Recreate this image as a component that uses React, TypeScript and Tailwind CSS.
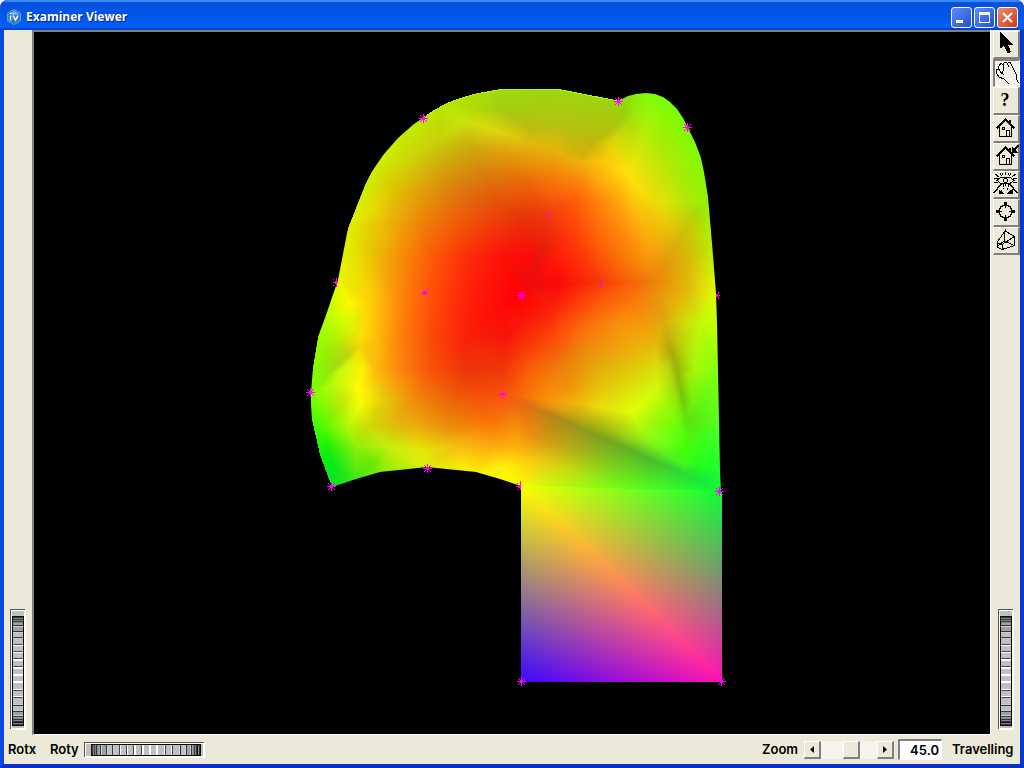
import React, { useState } from "react";

type Vertex = [number, number, string];

const SURFACE: Vertex[] = [
  // outline
  [332, 487, "0fe02a"], [320, 455, "10f010"], [311, 415, "50ff00"], [310, 392, "78ff00"],
  [313, 367, "82ff00"], [318, 337, "96ff00"], [325, 318, "b4ff00"], [337, 280, "e6f800"],
  [348, 228, "dcf000"], [365, 185, "ccf000"], [376, 163, "ccf000"], [390, 145, "ccec00"],
  [405, 130, "c4ec00"], [422, 116, "bcec00"], [441, 104, "b8e800"], [464, 95, "aee000"],
  [503, 87, "9fda10"], [528, 86, "9cd810"], [555, 87, "9cd610"], [577, 91, "9cd610"],
  [618, 99, "96d80c"], [636, 92, "84f00a"], [652, 91, "78ff08"], [673, 102, "74ff04"],
  [690, 127, "78ff00"], [702, 156, "80fc04"], [707, 172, "84fa05"], [710, 197, "8cf800"],
  [713, 243, "b4ee05"], [717, 293, "dcff00"], [718, 323, "ccff00"], [719, 370, "80ff10"],
  [720, 420, "5aff20"], [721, 470, "20ff30"], [722, 493, "0aff37"], [521, 490, "f8ff00"],
  [500, 481, "faf800"], [476, 474, "f8f208"], [427, 469, "dcee0a"], [380, 474, "80ea05"],
  [356, 481, "40e818"],
  // upper left
  [463, 121, "c8e40c"], [493, 130, "dcd80e"], [515, 137, "dec80e"], [530, 143, "e0b80c"],
  [500, 110, "a8cc10"], [470, 108, "b2dc08"], [440, 140, "c8d008"], [415, 155, "ccd408"],
  [470, 146, "ccac0c"], [445, 162, "d0a80c"], [500, 152, "dca00c"], [530, 110, "a8cc10"],
  [560, 125, "b4c410"], [530, 128, "bcbc10"], [557, 151, "e4b40a"],
  [583, 163, "f0b00a"], [593, 144, "c4b40c"], [608, 132, "b4c00c"], [583, 155, "d0b00c"],
  [625, 112, "98d00c"], [530, 162, "e89408"], [483, 173, "d88010"],
  [423, 193, "e09c0a"], [455, 190, "dc7c0c"], [390, 185, "dccc00"], [373, 210, "e8dc04"],
  [390, 220, "ecb408"], [423, 223, "f08008"], [457, 223, "f05c08"], [490, 223, "f04008"],
  [523, 217, "e83408"], [497, 200, "e45408"], [527, 185, "ea6408"], [557, 172, "f48808"],
  [357, 258, "e8e000"], [380, 258, "ecb408"], [403, 258, "f88808"], [433, 258, "fc5808"],
  [467, 258, "fc2c08"], [503, 258, "fc1008"], [528, 258, "ff0808"], [350, 303, "fff800"],
  // left and centre
  [370, 303, "ffd008"], [400, 303, "ff8808"], [433, 303, "ff4c08"], [467, 303, "ff2008"],
  [503, 303, "ff0808"], [521, 295, "ff0000"], [335, 337, "b0f404"], [350, 325, "dcf804"],
  [362, 337, "fcdc08"], [377, 337, "fdbc08"], [400, 337, "ff8008"], [433, 337, "fc4808"],
  [467, 337, "f82008"], [507, 337, "f81408"], [360, 346, "f4d408"], [350, 353, "c8d00c"],
  [338, 364, "a8d810"], [325, 378, "90ec08"], [353, 360, "e4f008"], [341, 371, "c8fc0c"],
  [363, 368, "fcf008"], [377, 370, "fcb80c"], [403, 370, "fa8010"], [433, 370, "f85008"],
  [467, 370, "ee3408"], [503, 370, "f03808"], [358, 387, "fffc08"], [342, 400, "c4e808"],
  [350, 384, "e8f808"], [330, 386, "b0fc08"], [320, 403, "80fc05"], [360, 403, "f8fc08"],
  [385, 400, "e4c808"], [400, 388, "f49c0c"],
  [413, 403, "f0900c"], [450, 403, "ec6808"], [482, 403, "f45808"], [503, 394, "fa5010"],
  [323, 427, "50fa05"], [347, 427, "b0f808"], [367, 428, "ccdc08"], [390, 425, "dcc008"],
  [413, 427, "ecb00c"], [450, 427, "ec8c08"], [490, 424, "f87808"], [327, 447, "18f008"],
  [357, 447, "90f008"], [390, 447, "c4f00c"], [420, 450, "e4e808"], [455, 447, "f4c010"],
  [490, 447, "fcac10"], [517, 447, "fdb00a"], [335, 467, "08e818"], [373, 463, "68e808"],
  [463, 463, "fce008"], [503, 467, "fff008"],
  // upper right
  [592, 160, "f6bc0a"], [612, 141, "dcd40a"], [630, 122, "acdc08"], [605, 160, "fcc80a"],
  [627, 173, "ffe00a"], [640, 150, "d0e808"], [645, 128, "b0f008"],
  [662, 145, "a8ec04"], [670, 172, "b8e804"], [600, 177, "feb00c"], [580, 182, "fc840c"],
  [620, 200, "ffa80c"], [635, 205, "fcc40c"], [600, 200, "ff880a"], [575, 200, "ff5c08"],
  [548, 215, "f03a0c"], [555, 195, "f8600c"], [650, 200, "f0dc08"], [667, 203, "d8e408"],
  [685, 200, "b4e808"], [698, 213, "a8dc08"], [690, 175, "98f004"], [650, 243, "fba80c"],
  [667, 230, "ecc00a"], [687, 228, "ccc408"], [675, 248, "dcac08"],
  [545, 245, "e82008"], [538, 262, "e8140c"], [530, 283, "ec0c0c"], [550, 268, "ff1008"],
  [570, 240, "ff3408"], [600, 240, "ff6408"], [630, 240, "ff8c0c"], [600, 220, "ff740a"],
  [640, 262, "f88c08"], [656, 278, "ec840c"], [657, 293, "ec900c"], [630, 283, "f86008"],
  [600, 283, "f83808"], [560, 285, "fc0a05"], [690, 260, "d8bc08"], [687, 290, "e4b80a"],
  [705, 287, "e4e008"],
  // lower right
  [600, 303, "fc5c08"], [550, 310, "fc2008"], [633, 305, "fc7c0a"], [517, 327, "f81808"],
  [550, 337, "fc4408"], [583, 330, "fa700c"], [617, 325, "f8900c"], [645, 325, "f49c0c"],
  [520, 353, "f83808"], [533, 370, "f86408"], [562, 367, "ec800c"], [583, 355, "ec8c0c"],
  [600, 370, "e4b00c"], [567, 387, "f0900a"], [600, 388, "e6c40c"], [618, 352, "eca80c"],
  [633, 372, "e0cc0a"], [640, 352, "e8b80a"], [657, 343, "e4b80a"], [657, 365, "d8dc0c"],
  [657, 387, "d0f80c"], [632, 392, "dce808"], [633, 412, "e0ff08"], [617, 410, "e4ec0a"],
  [600, 407, "ecdc0c"], [583, 404, "eec00c"], [566, 402, "f4a80c"], [550, 400, "f8940a"],
  [535, 398, "fa8008"], [520, 396, "fa6808"], [667, 403, "a0fa05"], [680, 430, "60ff08"],
  [664, 323, "dcac0c"], [687, 323, "d0e008"], [700, 323, "c4f808"], [675, 308, "e0b80a"],
  [660, 309, "e49c0c"], [667, 337, "c8ac0c"], [672, 353, "aca80a"], [677, 370, "98b40a"],
  [680, 387, "84c008"], [683, 403, "70cc08"], [686, 419, "60e00c"], [689, 435, "50f010"],
  [668, 365, "bcd40a"], [673, 387, "a4e00a"], [677, 405, "88ec08"], [681, 345, "bcd008"],
  [687, 375, "a0e808"], [695, 370, "a4f808"], [693, 403, "74f40c"], [704, 403, "60fa14"],
  [707, 437, "3cff20"], [687, 449, "40ff08"], [702, 465, "20ff20"],
  [518, 401, "ec6410"], [533, 407, "d87410"], [551, 415, "b88414"], [567, 422, "a09018"],
  [584, 430, "909a1c"], [600, 437, "80a020"], [617, 444, "70a824"], [633, 451, "60b028"],
  [650, 459, "4cbc2c"], [667, 466, "3ccc30"], [684, 474, "2cd834"], [702, 482, "18e838"],
  [548, 406, "e89010"], [562, 410, "dca010"], [580, 415, "ccb010"], [598, 421, "bcbc10"],
  [615, 429, "acc810"], [632, 438, "94dc18"], [640, 428, "b0f810"], [650, 444, "80f014"],
  [667, 444, "70ff18"], [667, 455, "5cf020"], [685, 464, "40f820"], [533, 437, "e89010"],
  [567, 447, "bca818"], [600, 460, "8cc418"], [633, 470, "60d820"], [665, 480, "40e82c"],
  [530, 463, "fcd010"], [567, 470, "c8dc10"], [600, 477, "8ce818"], [560, 489, "b8fc10"],
  [600, 490, "88ff10"], [650, 491, "50ff20"], [685, 492, "28ff2c"],
];

const OUTLINE =
  "332,487 326,476 321,462 317,448 314,434 312,420 311,405 311,393 313,367 318,337 325,318 338,280 348,228 365,185 371,173 377,164 384,154 391,146 398,138 406,131 414,124 423,118 432,112 442,106 453,101 465,97 476,94 487,92 503,89 530,89 555,89 565,90 577,93 613,100 618,101 628,96 636,94 646,93 655,94 663,97 670,102 677,109 683,118 688,128 695,142 701,158 704,172 708,197 712,243 716,293 717,323 718,370 719,420 720,470 721,493 521,490 521,486 500,479 476,472 427,467 380,472 356,479";

type Triangle = [number, number, number];

function triangulate(points: Vertex[]): Triangle[] {
  const all: [number, number][] = points.map((p) => [p[0], p[1]]);
  const n = all.length;
  all.push([-9000, -8000], [9500, -8100], [500, 12000]);
  let triangles: Triangle[] = [[n, n + 1, n + 2]];
  const encloses = (t: Triangle, x: number, y: number) => {
    const [ax, ay] = all[t[0]];
    const [bx, by] = all[t[1]];
    const [cx, cy] = all[t[2]];
    const d = 2 * (ax * (by - cy) + bx * (cy - ay) + cx * (ay - by));
    const a2 = ax * ax + ay * ay;
    const b2 = bx * bx + by * by;
    const c2 = cx * cx + cy * cy;
    const ux = (a2 * (by - cy) + b2 * (cy - ay) + c2 * (ay - by)) / d;
    const uy = (a2 * (cx - bx) + b2 * (ax - cx) + c2 * (bx - ax)) / d;
    return (ux - x) ** 2 + (uy - y) ** 2 < (ux - ax) ** 2 + (uy - ay) ** 2;
  };
  for (let i = 0; i < n; i++) {
    const edges = new Map<string, [number, number]>();
    const kept: Triangle[] = [];
    for (const t of triangles) {
      if (!encloses(t, all[i][0], all[i][1])) {
        kept.push(t);
        continue;
      }
      for (const [a, b] of [[t[0], t[1]], [t[1], t[2]], [t[2], t[0]]]) {
        const key = a < b ? `${a}-${b}` : `${b}-${a}`;
        if (edges.has(key)) edges.delete(key);
        else edges.set(key, [a, b]);
      }
    }
    edges.forEach(([a, b]) => {
      const area = (all[b][0] - all[a][0]) * (all[i][1] - all[a][1]) - (all[i][0] - all[a][0]) * (all[b][1] - all[a][1]);
      if (Math.abs(area) > 0.01) kept.push([a, b, i]);
    });
    triangles = kept;
  }
  return triangles.filter((t) => t.every((k) => k < n));
}

const channelOf = (hex: string, c: number) => parseInt(hex.slice(c * 2, c * 2 + 2), 16);
const paint = (c: number, v: number) => `rgb(${[0, 1, 2].map((k) => (k === c ? Math.round(v) : 0)).join(",")})`;

// Each colour channel is linear over a triangle, so one linear gradient per channel shades it smoothly.
function Facet({ corners, channel, id }: { corners: Vertex[]; channel: number; id: string }) {
  const values = corners.map((v) => channelOf(v[2], channel));
  const [a, b, c] = corners;
  const points = corners.map((v) => `${v[0]},${v[1]}`).join(" ");
  const det = (b[0] - a[0]) * (c[1] - a[1]) - (c[0] - a[0]) * (b[1] - a[1]);
  const gx = ((values[1] - values[0]) * (c[1] - a[1]) - (values[2] - values[0]) * (b[1] - a[1])) / det;
  const gy = ((values[2] - values[0]) * (b[0] - a[0]) - (values[1] - values[0]) * (c[0] - a[0])) / det;
  const low = Math.min(...values);
  const high = Math.max(...values);
  if (high === low) return <polygon points={points} fill={paint(channel, low)} />;
  const start = corners[values.indexOf(low)];
  const scale = (high - low) / (gx * gx + gy * gy);
  return (
    <>
      <linearGradient
        id={id}
        gradientUnits="userSpaceOnUse"
        x1={start[0]}
        y1={start[1]}
        x2={start[0] + gx * scale}
        y2={start[1] + gy * scale}
      >
        <stop offset="0" stopColor={paint(channel, low)} />
        <stop offset="1" stopColor={paint(channel, high)} />
      </linearGradient>
      <polygon points={points} fill={`url(#${id})`} />
    </>
  );
}

const surfaceFacets: Vertex[][] = triangulate(SURFACE).map((t) => t.map((k) => SURFACE[k]));
const panelFacets: Vertex[][] = [
  [[521, 486, "f8ff00"], [722, 491, "0aff37"], [722, 682, "ff10b4"]],
  [[521, 486, "f8ff00"], [722, 682, "ff10b4"], [521, 682, "3a08ff"]],
];

function Markers() {
  const full: [number, number][] = [
    [423, 118], [618, 101], [687, 127], [521, 295], [310, 392],
    [331, 486], [427, 468], [719, 491], [521, 681], [721, 681],
  ];
  return (
    <g fill="#ff00ff" shapeRendering="crispEdges">
      {full.map(([x, y]) => (
        <path
          key={`${x}-${y}`}
          transform={`translate(${x} ${y})`}
          d="M-4 0h9v1h-9zM0-4h1v9h-1zM-1-1h3v3h-3zM-3-3h1v1h-1zM3-3h1v1h-1zM-3 3h1v1h-1zM3 3h1v1h-1zM-2-2h1v1h-1zM2-2h1v1h-1zM-2 2h1v1h-1zM2 2h1v1h-1z"
        />
      ))}
      <path d="M422 292h6v1h-6zM423 291h3v3h-3zM425 290h1v5h-1zM427 289h1v1h-1zM422 294h1v1h-1z" />
      <path d="M333 282h5v1h-5zM336 278h1v9h-1zM335 281h2v3h-2zM333 279h1v1h-1zM333 285h1v1h-1z" />
      <path d="M600 280h1v8h-1z" />
      <path d="M548 213h1v4h-1zM549 212h1v3h-1z" />
      <path d="M502 391h1v7h-1zM500 393h5v2h-5zM499 395h1v1h-1zM505 395h1v1h-1z" />
      <path d="M716 295h4v1h-4zM716 294h2v3h-2zM718 292h1v2h-1zM718 297h1v2h-1z" />
      <path d="M516 486h5v1h-5zM520 481h1v9h-1zM518 485h3v3h-3zM517 483h1v1h-1zM517 489h1v1h-1z" />
    </g>
  );
}

function Scene() {
  return (
    <svg className="block h-full w-full" viewBox="34 32 956 702" role="img" aria-label="Shaded surface">
      <defs>
        <clipPath id="outline">
          <polygon points={OUTLINE} />
        </clipPath>
      </defs>
      {[0, 1, 2].map((channel) => (
        <g key={channel} className="mix-blend-screen" shapeRendering="crispEdges">
          <g clipPath="url(#outline)">
            {surfaceFacets.map((corners, k) => (
              <Facet key={k} corners={corners} channel={channel} id={`s${channel}-${k}`} />
            ))}
          </g>
          {panelFacets.map((corners, k) => (
            <Facet key={k} corners={corners} channel={channel} id={`p${channel}-${k}`} />
          ))}
        </g>
      ))}
      <polyline
        points="423,118 432,112 442,106 453,101 465,97 476,94 487,92 503,89 555,89 577,93 618,101"
        fill="none"
        stroke="#baf408"
        strokeWidth="1"
        shapeRendering="crispEdges"
      />
      <Markers />
    </svg>
  );
}

const TICKS = [8, 10, 12, 16, 22, 28, 35, 42, 49, 57, 66, 73, 81, 88, 96, 102, 107, 110, 112, 115];

function Wheel({ label, vertical = false }: { label: string; vertical?: boolean }) {
  const box = (along: number, across: number, length: number, depth: number, fill: string) =>
    vertical ? (
      <rect x={across} y={along} width={depth} height={length} fill={fill} />
    ) : (
      <rect x={along} y={across} width={length} height={depth} fill={fill} />
    );
  return (
    <div className={vertical ? "relative h-[121px] w-4" : "relative h-4 w-[121px]"}>
      <svg
        className="block h-full w-full"
        viewBox={vertical ? "0 0 16 121" : "0 0 121 16"}
        shapeRendering="crispEdges"
        aria-hidden="true"
      >
        {box(0, 0, 121, 16, "#ffffff")}
        {box(0, 0, 120, 15, "#555555")}
        {box(1, 1, 119, 14, "#ffffff")}
        {box(2, 2, 117, 12, "#c0c0c0")}
        {box(7, 2, 110, 12, "#000000")}
        {box(7, 3, 110, 10, "#303030")}
        {box(13, 3, 98, 10, "#a0a0a0")}
        {box(22, 3, 80, 10, "#c0c0c0")}
        {box(7, 3, 6, 10, "#101010")}
        {box(111, 3, 6, 10, "#101010")}
        {TICKS.map((t) => {
          const inner = t > 30 && t < 92;
          const light = inner ? "#ffffff" : t > 14 && t < 108 ? "#d0d0d0" : "#808880";
          return (
            <g key={t}>
              {box(t, 3, 1, 10, inner ? "#484848" : "#383838")}
              {box(t < 60 ? t + 1 : t - 1, 3, t > 45 && t < 76 ? 2 : 1, 10, light)}
            </g>
          );
        })}
      </svg>
      <input
        type="range"
        aria-label={label}
        className="absolute inset-0 m-0 h-full w-full cursor-pointer opacity-0"
      />
    </div>
  );
}

const HOUSE = (
  <>
    <path d="M3.500 13.500L12.500 4.500L21.500 13.500" />
    <path d="M6.500 12V21.500H18.500V12M13.500 21V15.500H16.500V21M17.500 9V5.500H16.500V8" strokeWidth="1" />
    <path d="M9 12h3v3h-3zM10 13h1v1h-1z" fill="#000" fillRule="evenodd" stroke="none" />
  </>
);

const TOOLS: { name: string; icon: React.ReactNode }[] = [
  { name: "Select", icon: <path d="M8 3V16L11 13.500L15 21.500L17 20.500L14 13H18.500Z" fill="#000" /> },
  {
    name: "View",
    icon: (
      <g strokeWidth="1">
        <path d="M16 25L11 20L6 18L3.500 14V10.500L6 10L7.500 13L11 16" />
        <path d="M5 9.500L6.500 5.500L8.500 4.500L10.500 6L11 9.500L9 14" />
        <path d="M10 5L12 3L14.500 4.500L16 8" />
        <path d="M14.500 3.500H17.500L19 7L20.500 9.500L23 15L24 21L25.500 24" />
      </g>
    ),
  },
  {
    name: "Help",
    icon: (
      <text x="12" y="19" textAnchor="middle" fill="#000" stroke="none" className="font-['Liberation_Serif',serif] text-[18px] font-bold">
        ?
      </text>
    ),
  },
  { name: "Home", icon: HOUSE },
  {
    name: "Set home",
    icon: (
      <>
        {HOUSE}
        <path d="M25.500 2.500L21 7" strokeWidth="2" />
        <path d="M18.500 3.500V9.500H24.500Z" fill="#000" stroke="none" />
      </>
    ),
  },
  {
    name: "View all",
    icon: (
      <g strokeWidth="1">
        <path d="M4 9.500L8 6H17L21 9.500L17 12.500H8Z" />
        <circle cx="12.500" cy="9.500" r="2" />
        <path d="M2 3L6 6M7 2L8.500 5M12.500 1V4M18 2L16.500 5M23 3L19 6M1 7L5 8M24 7L20 8M1 12L5 11M24 12L20 11M10 4L9 2M15 4L16 2M10 13V16M15 13V16M12.500 13V15" />
        <path d="M8 13L1 22M17 13L24 22" strokeWidth="1.500" />
        <path d="M11 17L8 21M14 17L17 21" strokeDasharray="2 1" />
        <path d="M6 22V19L10 22ZM15 22L19 19V22Z" fill="#000" />
      </g>
    ),
  },
  {
    name: "Seek",
    icon: (
      <>
        <circle cx="12.500" cy="12.500" r="6.500" />
        <path d="M11 3h3v4h-3zM11 18h3v4h-3zM3 11h4v3h-4zM18 11h4v3h-4z" fill="#000" stroke="none" />
        <path d="M12.500 6V9M12.500 16V19M6 12.500H9M16 12.500H19" strokeWidth="1" />
      </>
    ),
  },
  {
    name: "Perspective",
    icon: (
      <path d="M12 4L21.500 9.500V18.500L9 22.500L4 20V15.500L12 4L11 14L21.500 18.500M4 15.500L9 17.500V22.500M9 17.500L21.500 9.500M4 20L11 14" strokeWidth="1" />
    ),
  },
];

function ToolButton({ name, icon, pressed }: { name: string; icon: React.ReactNode; pressed: boolean }) {
  return (
    <button
      type="button"
      aria-label={name}
      aria-pressed={pressed}
      className={
        pressed
          ? "h-7 w-[27px] border-t-2 border-l-2 border-r border-b border-t-[#808080] border-l-[#808080] border-r-white border-b-white bg-[#f4f1e8]"
          : "h-7 w-[27px] border-t border-l border-r-2 border-b-2 border-t-white border-l-white border-r-[#808080] border-b-[#808080] bg-[#ece9d8]"
      }
    >
      <svg
        className="block h-[25px] w-6 overflow-visible"
        viewBox={pressed ? "2 2 24 25" : "1 1 24 25"}
        fill="none"
        stroke="#000"
        strokeWidth="1.500"
        shapeRendering="crispEdges"
        aria-hidden="true"
      >
        {icon}
      </svg>
    </button>
  );
}

function Logo() {
  return (
    <svg className="h-4 w-4" viewBox="0 0 16 16" aria-hidden="true">
      <path d="M8 0.500L14.500 4V12L8 15.500L1.500 12V4Z" fill="#2f7fc4" stroke="#5a9ad8" strokeWidth="1" />
      <path d="M3 5L8 2L13 5L8 6Z" fill="#7fb9e6" />
      <path d="M4.500 6.500V11.500M7 6.500L9.500 11L12 6.500" fill="none" stroke="#fff" strokeWidth="1.500" />
      <path d="M4 4.500H5.500" stroke="#fff" />
    </svg>
  );
}

const CAPTION =
  "flex h-[21px] w-[21px] items-center justify-center rounded-[3px] border border-white bg-linear-to-br";

export default function App() {
  const [zoom, setZoom] = useState(45);
  return (
    <div className="h-screen bg-[#f4f4f8] font-[Inter,'Liberation_Sans',sans-serif] text-black">
      <div className="flex h-full flex-col overflow-hidden rounded-t-lg bg-[#0a3fe0]">
        <header className="flex h-[30px] shrink-0 items-center bg-linear-to-b from-[#0a4fd8] via-[#0055ea] via-50% to-[#0460f8] px-[6px] pt-1 shadow-[inset_0_2px_1px_#3c8cf8,inset_0_-2px_1px_#0046c8]">
          <Logo />
          <h1 className="ml-1 flex-1 font-['Open_Sans','Noto_Sans',sans-serif] text-xs font-bold text-white [text-shadow:1px_1px_0_#0a1f80]">
            Examiner Viewer
          </h1>
          <div className="flex gap-[2px]">
            <button type="button" aria-label="Minimize" className={`${CAPTION} from-[#5f8cf6] to-[#2250d8]`}>
              <svg className="h-[19px] w-[19px]" viewBox="0 0 19 19" aria-hidden="true">
                <path d="M4 12h7v3h-7z" fill="#fff" />
              </svg>
            </button>
            <button type="button" aria-label="Maximize" className={`${CAPTION} from-[#5f8cf6] to-[#2250d8]`}>
              <svg className="h-[19px] w-[19px]" viewBox="0 0 19 19" aria-hidden="true">
                <path d="M4 4h11v11h-11zM5 7h9v7h-9z" fill="#fff" fillRule="evenodd" />
              </svg>
            </button>
            <button type="button" aria-label="Close" className={`${CAPTION} from-[#f08a68] to-[#c83810]`}>
              <svg className="h-[19px] w-[19px]" viewBox="0 0 19 19" aria-hidden="true">
                <path d="M5 5L14 14M14 5L5 14" stroke="#fff" strokeWidth="2" />
              </svg>
            </button>
          </div>
        </header>

        <div className="flex min-h-0 flex-1 flex-col border-x-4 border-b-4 border-l-[#0a48e0] border-r-[#0438d0] border-b-[#0a30c8]">
          <div className="flex min-h-0 flex-1 bg-[#ece9d8]">
            <aside className="flex w-7 shrink-0 flex-col justify-end pb-[5px] pl-[6px]">
              <Wheel label="Rotx" vertical />
            </aside>
            <main className="min-w-0 flex-1 border-t-2 border-l-2 border-t-[#808080] border-l-[#808080] border-b border-b-white bg-black">
              <Scene />
            </main>
            <aside className="flex w-[30px] shrink-0 flex-col items-end justify-between border-l border-white pt-px pb-[5px]">
              <div className="flex w-[27px] flex-col">
                {TOOLS.map((tool) => (
                  <ToolButton key={tool.name} name={tool.name} icon={tool.icon} pressed={tool.name === "View"} />
                ))}
              </div>
              <div className="mr-[6px]">
                <Wheel label="Travelling" vertical />
              </div>
            </aside>
          </div>

          <footer className="flex h-[29px] shrink-0 items-center bg-[#ece9d8] px-1 text-[13px] font-semibold">
            <span className="w-[42px]">Rotx</span>
            <span className="w-[34px]">Roty</span>
            <Wheel label="Roty" />
            <label htmlFor="zoom" className="ml-auto w-[42px]">
              Zoom
            </label>
            <button
              type="button"
              aria-label="Zoom out"
              onClick={() => setZoom((z) => Math.max(1, z - 1))}
              className="flex h-[18px] w-[17px] items-center justify-center border-t border-l border-r-2 border-b-2 border-t-white border-l-white border-r-[#808080] border-b-[#808080]"
            >
              <svg className="h-[7px] w-1" viewBox="0 0 4 7" aria-hidden="true">
                <path d="M4 0V7L0 3.500Z" />
              </svg>
            </button>
            <input
              id="zoom"
              type="range"
              min="1"
              max="80"
              value={zoom}
              onChange={(e) => setZoom(Number(e.target.value))}
              className="m-0 h-[18px] w-14 appearance-none bg-[#f6f4ec] [&::-webkit-slider-thumb]:h-[18px] [&::-webkit-slider-thumb]:w-[17px] [&::-webkit-slider-thumb]:appearance-none [&::-webkit-slider-thumb]:border-t [&::-webkit-slider-thumb]:border-l [&::-webkit-slider-thumb]:border-r-2 [&::-webkit-slider-thumb]:border-b-2 [&::-webkit-slider-thumb]:border-t-white [&::-webkit-slider-thumb]:border-l-white [&::-webkit-slider-thumb]:border-r-[#808080] [&::-webkit-slider-thumb]:border-b-[#808080] [&::-webkit-slider-thumb]:bg-[#ece9d8]"
            />
            <button
              type="button"
              aria-label="Zoom in"
              onClick={() => setZoom((z) => Math.min(80, z + 1))}
              className="flex h-[18px] w-[17px] items-center justify-center border-t border-l border-r-2 border-b-2 border-t-white border-l-white border-r-[#808080] border-b-[#808080]"
            >
              <svg className="h-[7px] w-1" viewBox="0 0 4 7" aria-hidden="true">
                <path d="M0 0V7L4 3.500Z" />
              </svg>
            </button>
            <input
              type="text"
              aria-label="Zoom value"
              readOnly
              value={zoom.toFixed(1)}
              className="ml-1 h-[21px] w-11 border-t-2 border-l-2 border-r border-b border-t-[#808080] border-l-[#808080] border-r-white border-b-white bg-white pr-[2px] text-right font-semibold"
            />
            <span className="ml-[10px] w-[64px]">Travelling</span>
          </footer>
        </div>
      </div>
    </div>
  );
}
